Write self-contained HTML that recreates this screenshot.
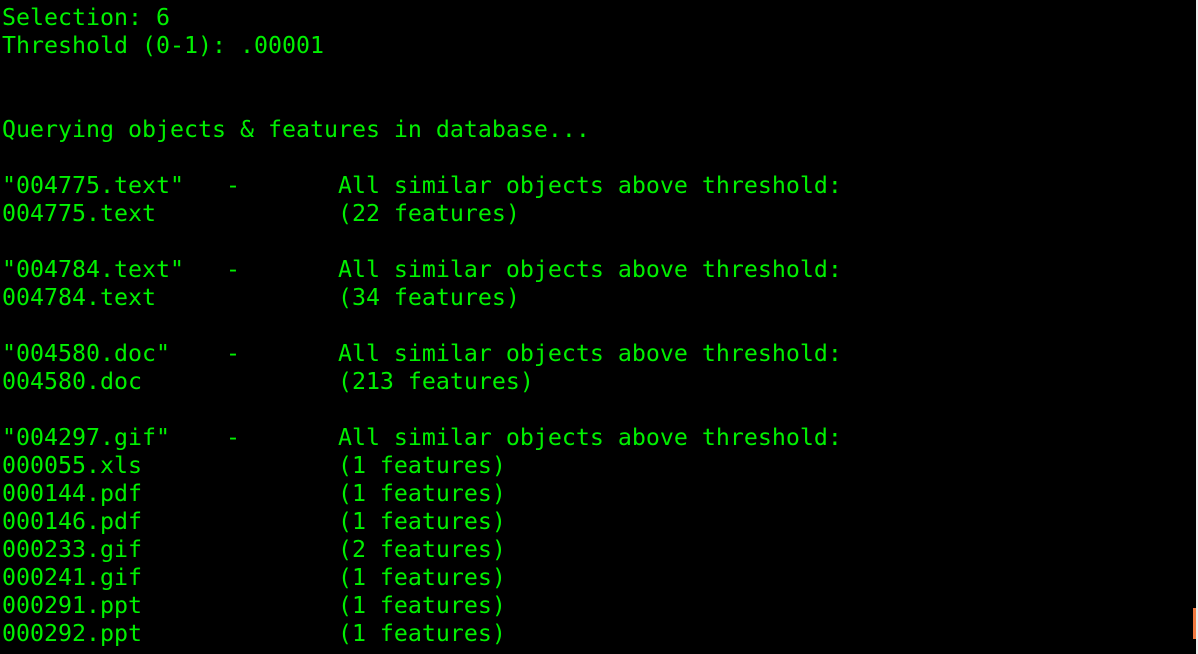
<!DOCTYPE html>
<html><head><style>
html,body{margin:0;padding:0;background:#000;width:1198px;height:654px;overflow:hidden;position:relative}
pre{margin:0;position:absolute;left:2px;top:4px;font-family:"DejaVu Sans Mono","Liberation Mono",monospace;font-size:23.25px;line-height:28px;color:#00f000}
.bar{position:absolute;left:1193px;top:608px;width:3px;height:31px;background:#f07840}
.edge{position:absolute;left:1196px;top:0;width:2px;height:654px;background:#ececec}
</style></head><body>
<pre>Selection: 6
Threshold (0-1): .00001


Querying objects &amp; features in database...

"004775.text"   -       All similar objects above threshold:
004775.text             (22 features)

"004784.text"   -       All similar objects above threshold:
004784.text             (34 features)

"004580.doc"    -       All similar objects above threshold:
004580.doc              (213 features)

"004297.gif"    -       All similar objects above threshold:
000055.xls              (1 features)
000144.pdf              (1 features)
000146.pdf              (1 features)
000233.gif              (2 features)
000241.gif              (1 features)
000291.ppt              (1 features)
000292.ppt              (1 features)</pre>
<div class="edge"></div>
<div class="bar"></div>
</body></html>
